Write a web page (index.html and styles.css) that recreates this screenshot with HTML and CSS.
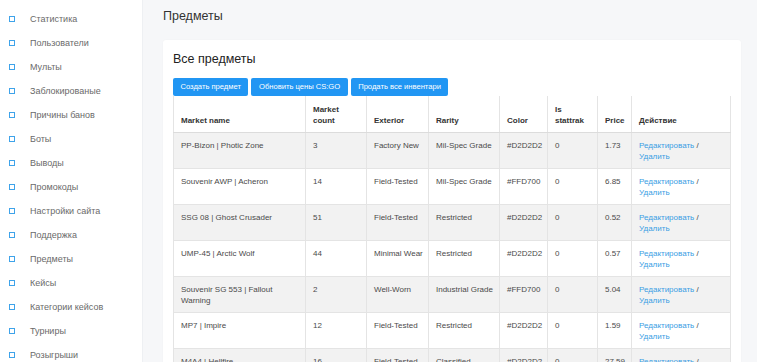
FILE: index.html
```html
<!DOCTYPE html>
<html lang="ru">
<head>
    <meta charset="UTF-8">
    <meta name="viewport" content="width=device-width, initial-scale=1.0">
    <title>Предметы</title>
    <link rel="stylesheet" href="styles.css">
</head>
<body>
    <div class="layout">
        <!-- Sidebar -->
        <aside class="sidebar">
            <ul class="nav">
                <li><span class="nav-icon"></span>Статистика</li>
                <li><span class="nav-icon"></span>Пользователи</li>
                <li><span class="nav-icon"></span>Мульты</li>
                <li><span class="nav-icon"></span>Заблокированые</li>
                <li><span class="nav-icon"></span>Причины банов</li>
                <li><span class="nav-icon"></span>Боты</li>
                <li><span class="nav-icon"></span>Выводы</li>
                <li><span class="nav-icon"></span>Промокоды</li>
                <li><span class="nav-icon"></span>Настройки сайта</li>
                <li><span class="nav-icon"></span>Поддержка</li>
                <li><span class="nav-icon"></span>Предметы</li>
                <li><span class="nav-icon"></span>Кейсы</li>
                <li><span class="nav-icon"></span>Категории кейсов</li>
                <li><span class="nav-icon"></span>Турниры</li>
                <li><span class="nav-icon"></span>Розыгрыши</li>
            </ul>
        </aside>

        <!-- Content -->
        <main class="content">
            <h1 class="page-title">Предметы</h1>

            <div class="card">
                <h2 class="card-title">Все предметы</h2>

                <div class="actions">
                    <a href="#" class="btn">Создать предмет</a>
                    <a href="#" class="btn">Обновить цены CS:GO</a>
                    <a href="#" class="btn">Продать все инвентари</a>
                </div>

                <table class="items-table">
                    <colgroup>
                        <col class="c-name">
                        <col class="c-count">
                        <col class="c-exterior">
                        <col class="c-rarity">
                        <col class="c-color">
                        <col class="c-stat">
                        <col class="c-price">
                        <col class="c-action">
                    </colgroup>
                    <thead>
                        <tr>
                            <th>Market name</th>
                            <th>Market count</th>
                            <th>Exterior</th>
                            <th>Rarity</th>
                            <th>Color</th>
                            <th>Is stattrak</th>
                            <th>Price</th>
                            <th>Действие</th>
                        </tr>
                    </thead>
                    <tbody>
                        <tr>
                            <td>PP-Bizon | Photic Zone</td>
                            <td>3</td>
                            <td>Factory New</td>
                            <td>Mil-Spec Grade</td>
                            <td>#D2D2D2</td>
                            <td>0</td>
                            <td>1.73</td>
                            <td><a href="#">Редактировать</a> / <a href="#">Удалить</a></td>
                        </tr>
                        <tr>
                            <td>Souvenir AWP | Acheron</td>
                            <td>14</td>
                            <td>Field-Tested</td>
                            <td>Mil-Spec Grade</td>
                            <td>#FFD700</td>
                            <td>0</td>
                            <td>6.85</td>
                            <td><a href="#">Редактировать</a> / <a href="#">Удалить</a></td>
                        </tr>
                        <tr>
                            <td>SSG 08 | Ghost Crusader</td>
                            <td>51</td>
                            <td>Field-Tested</td>
                            <td>Restricted</td>
                            <td>#D2D2D2</td>
                            <td>0</td>
                            <td>0.52</td>
                            <td><a href="#">Редактировать</a> / <a href="#">Удалить</a></td>
                        </tr>
                        <tr>
                            <td>UMP-45 | Arctic Wolf</td>
                            <td>44</td>
                            <td>Minimal Wear</td>
                            <td>Restricted</td>
                            <td>#D2D2D2</td>
                            <td>0</td>
                            <td>0.57</td>
                            <td><a href="#">Редактировать</a> / <a href="#">Удалить</a></td>
                        </tr>
                        <tr>
                            <td>Souvenir SG 553 | Fallout Warning</td>
                            <td>2</td>
                            <td>Well-Worn</td>
                            <td>Industrial Grade</td>
                            <td>#FFD700</td>
                            <td>0</td>
                            <td>5.04</td>
                            <td><a href="#">Редактировать</a> / <a href="#">Удалить</a></td>
                        </tr>
                        <tr>
                            <td>MP7 | Impire</td>
                            <td>12</td>
                            <td>Field-Tested</td>
                            <td>Restricted</td>
                            <td>#D2D2D2</td>
                            <td>0</td>
                            <td>1.59</td>
                            <td><a href="#">Редактировать</a> / <a href="#">Удалить</a></td>
                        </tr>
                        <tr>
                            <td>M4A4 | Hellfire</td>
                            <td>16</td>
                            <td>Field-Tested</td>
                            <td>Classified</td>
                            <td>#D2D2D2</td>
                            <td>0</td>
                            <td>27.59</td>
                            <td><a href="#">Редактировать</a> / <a href="#">Удалить</a></td>
                        </tr>
                    </tbody>
                </table>
            </div>
        </main>
    </div>
</body>
</html>
```

FILE: styles.css
```css
body {
    font-family: "Liberation Sans", Arial, sans-serif;
    background-color: #f6f7f9;
    margin: 0;
    padding: 0;
    color: #333;
}

.layout {
    display: flex;
    align-items: flex-start;
    min-height: 100vh;
}

/* Sidebar */
.sidebar {
    width: 143px;
    flex-shrink: 0;
    align-self: stretch;
    background-color: #ffffff;
    border-right: 1px solid #eef0f3;
    box-sizing: border-box;
}

.nav {
    list-style: none;
    margin: 0;
    padding: 7px 0 0;
}

.nav li {
    display: flex;
    align-items: center;
    height: 24px;
    padding-left: 9px;
    font-size: 9px;
    color: #6a6a6a;
}

.nav-icon {
    width: 4px;
    height: 4px;
    border: 1.5px solid #3ea3ea;
    margin-right: 15px;
}

/* Content */
.content {
    flex: 1;
    padding: 0 16px 0 20px;
    min-width: 0;
}

.page-title {
    font-size: 12.5px;
    font-weight: normal;
    color: #333;
    margin: 9px 0 16px;
    line-height: 15px;
}

.card {
    background-color: #ffffff;
    border-radius: 3px;
    padding: 10px 10px 20px;
    box-shadow: 0 0 2px rgba(0, 0, 0, 0.03);
}

.card-title {
    font-size: 12.5px;
    font-weight: normal;
    color: #222;
    margin: 1px 0 11px;
    line-height: 16px;
}

.actions {
    display: flex;
    gap: 3px;
}

.btn {
    display: inline-block;
    background-color: #2196f3;
    color: white;
    font-size: 7.6px;
    line-height: 18px;
    padding: 0 7.5px;
    border-radius: 2px;
    text-decoration: none;
}

/* Table */
.items-table {
    width: 557px;
    table-layout: fixed;
    border-collapse: collapse;
    font-size: 8px;
    color: #4a4a4a;
}

.c-name { width: 132px; }
.c-count { width: 61px; }
.c-exterior { width: 62px; }
.c-rarity { width: 71px; }
.c-color { width: 48px; }
.c-stat { width: 50px; }
.c-price { width: 34px; }
.c-action { width: 99px; }

.items-table th,
.items-table td {
    border: 1px solid #e4e4e4;
    padding: 7px 2px 6px 7px;
    line-height: 11px;
    text-align: left;
    vertical-align: top;
}

.items-table th {
    vertical-align: bottom;
    font-weight: bold;
    color: #333;
    padding: 8px 7px 6px;
    border-top: none;
    border-bottom: 1px solid #dcdcdc;
}

.items-table tbody tr:nth-child(odd) {
    background-color: #f2f2f2;
}

.items-table a {
    color: #3a9ee4;
    text-decoration: none;
}
```
